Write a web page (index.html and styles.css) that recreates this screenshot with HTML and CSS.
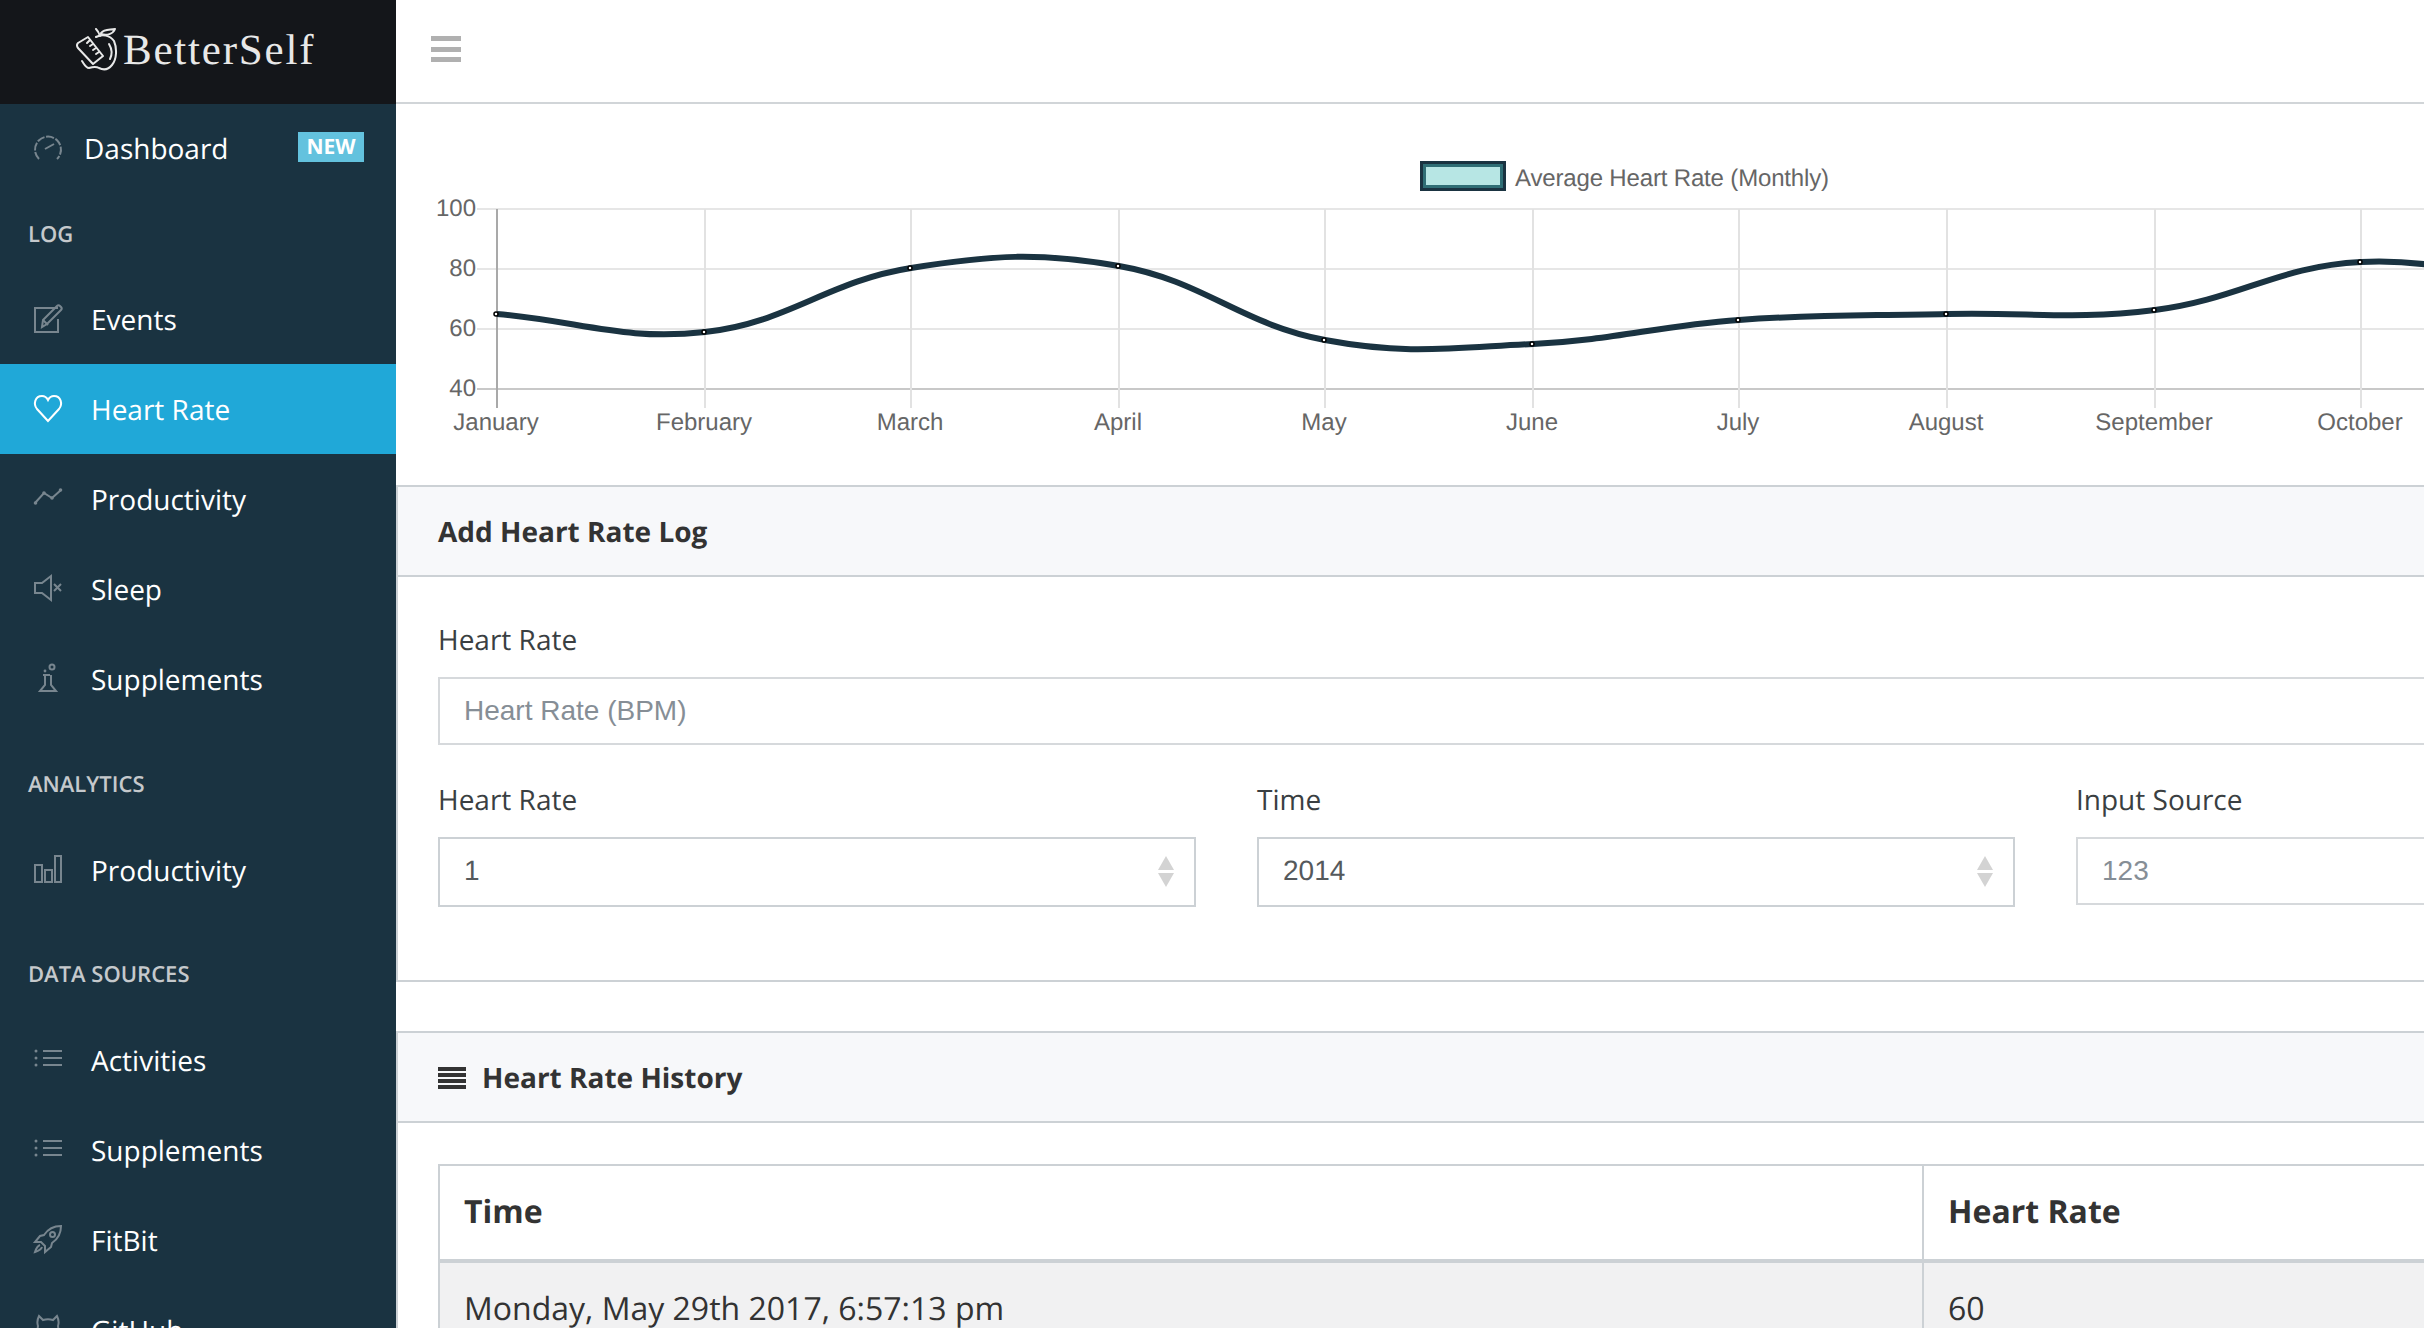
FILE: index.html
```html
<!DOCTYPE html>
<html lang="en">
<head>
<meta charset="utf-8">
<title>BetterSelf - Heart Rate</title>
<link rel="stylesheet" href="styles.css">
</head>
<body>
<div class="app">
  <aside class="sidebar">
    <div class="brand">
      <svg class="brand-logo" viewBox="0 0 42 44" fill="none" stroke="#e8e8e8" stroke-width="2" stroke-linecap="round" stroke-linejoin="round">
        <path d="M20 9C26 6 34 7 38 13C41 20 41 31 36 37C32 42 27 42 23 40C20 38 16 39 13 40C10 40 8 36 6 33"/>
        <path d="M2 15L12 9L27 28L17 36L2 20Q0 17 2 15Z"/>
        <path d="M14 12L11 15M17 16L14 18M20 20L17 22M23 24L20 26"/>
        <path d="M24 8C23 5 22 3 20 1M25 5C28 1 33 2 39 1C37 6 31 8 25 6"/>
        <path d="M33 16C36 21 36 27 34 31"/>
      </svg>
      <span class="brand-name">BetterSelf</span>
    </div>
    <nav class="nav">
      <a class="nav-item nav-item-top">
        <svg class="icon" viewBox="0 0 28 28"><path d="M5 25A13 13 0 1 1 23 25" stroke-dasharray="8 1.6"/><path d="M11 15L20 10"/></svg>
        <span class="nav-label-top">Dashboard</span>
        <span class="badge">NEW</span>
      </a>
      <div class="nav-title">Log</div>
      <a class="nav-item">
        <svg class="icon" viewBox="0 0 28 28"><path d="M24 4H1V28H24V15"/><path d="M8 23L9 16L23 2C24 1 25 1 26 2L27 3C28 4 28 5 27 6L13 20Z"/><path d="M9 16L14 21"/></svg>
        <span>Events</span>
      </a>
      <a class="nav-item active">
        <svg class="icon" viewBox="0 0 28 28"><path d="M14 27L3 15C-1 10 1 2 8 2C11 2 13 4 14 6C15 4 17 2 20 2C27 2 29 10 25 15Z"/></svg>
        <span>Heart Rate</span>
      </a>
      <a class="nav-item">
        <svg class="icon" viewBox="0 0 28 28"><path d="M1 19L10 9L18 14L27 6"/><circle class="dot" cx="1.500" cy="19" r="1.800"/><circle class="dot" cx="10" cy="9" r="1.800"/><circle class="dot" cx="18" cy="14" r="1.800"/><circle class="dot" cx="26.500" cy="6" r="1.800"/></svg>
        <span>Productivity</span>
      </a>
      <a class="nav-item">
        <svg class="icon" viewBox="0 0 28 28"><path d="M17 2V26L8 19H1V9H8Z"/><path d="M20 10L27 17M27 10L20 17"/></svg>
        <span>Sleep</span>
      </a>
      <a class="nav-item">
        <svg class="icon" viewBox="0 0 28 28"><circle cx="18" cy="3" r="2.500"/><circle class="dot" cx="11" cy="7" r="1.400"/><path d="M9 11H16M11 11V21L6 27H22L17 21V11"/></svg>
        <span>Supplements</span>
      </a>
      <div class="nav-title nav-title-gap">Analytics</div>
      <a class="nav-item">
        <svg class="icon" viewBox="0 0 28 28"><rect x="1" y="10" width="7" height="17"/><rect x="11" y="15" width="7" height="12"/><rect x="21" y="1" width="6" height="26"/></svg>
        <span>Productivity</span>
      </a>
      <div class="nav-title nav-title-gap nav-title-tight">Data Sources</div>
      <a class="nav-item">
        <svg class="icon" viewBox="0 0 28 28"><path d="M9 6H28M9 13H28M9 20H28"/><circle class="dot" cx="2" cy="6" r="1.500"/><circle class="dot" cx="2" cy="13" r="1.500"/><circle class="dot" cx="2" cy="20" r="1.500"/></svg>
        <span>Activities</span>
      </a>
      <a class="nav-item">
        <svg class="icon" viewBox="0 0 28 28"><path d="M9 6H28M9 13H28M9 20H28"/><circle class="dot" cx="2" cy="6" r="1.500"/><circle class="dot" cx="2" cy="13" r="1.500"/><circle class="dot" cx="2" cy="20" r="1.500"/></svg>
        <span>Supplements</span>
      </a>
      <a class="nav-item">
        <svg class="icon" viewBox="0 0 28 28"><path d="M27 1C20 1 14 4 10 10L6 11L1 17L7 17L11 21L11 27L17 22L18 18C24 14 27 8 27 1Z"/><circle cx="18.500" cy="9.500" r="2.500"/><path d="M6 20C3 21 2 24 1 27C4 26 7 25 8 22"/></svg>
        <span>FitBit</span>
      </a>
      <a class="nav-item">
        <svg class="icon" viewBox="0 0 28 28"><path d="M5 1L9 5C12 4 16 4 19 5L23 1C25 5 25 8 24 11C25 16 23 21 17 22V27H11V22C5 21 3 16 4 11C3 8 3 5 5 1Z"/></svg>
        <span>GitHub</span>
      </a>
    </nav>
  </aside>
  <main class="main">
    <header class="topbar">
      <svg class="hamburger" viewBox="0 0 30 26"><path d="M0 2.500H30M0 13.500H30M0 23.500H30"/></svg>
    </header>
    <section class="chart-area">
      <svg class="chart" viewBox="396 104 2028 381" width="2028" height="381">
        <rect class="legend-outer" x="1420" y="161" width="86" height="30"/>
        <rect class="legend-mid" x="1423" y="164" width="80" height="24"/>
        <rect class="legend-fill" x="1426" y="167" width="74" height="18"/>
        <text class="legend-text" x="1515" y="186">Average Heart Rate (Monthly)</text>

        <path class="grid" d="M477 209H2424M477 269H2424M477 329H2424"/>
        <path class="grid-axis" d="M477 389H2424"/>
        <path class="grid-v" d="M705 209V408M911 209V408M1119 209V408M1325 209V408M1533 209V408M1739 209V408M1947 209V408M2155 209V408M2361 209V408"/>
        <path class="grid-first" d="M497 209V408"/>

        <text class="tick tick-y" x="476" y="216">100</text>
        <text class="tick tick-y" x="476" y="276">80</text>
        <text class="tick tick-y" x="476" y="336">60</text>
        <text class="tick tick-y" x="476" y="396">40</text>

        <text class="tick tick-x" x="496" y="430">January</text>
        <text class="tick tick-x" x="704" y="430">February</text>
        <text class="tick tick-x" x="910" y="430">March</text>
        <text class="tick tick-x" x="1118" y="430">April</text>
        <text class="tick tick-x" x="1324" y="430">May</text>
        <text class="tick tick-x" x="1532" y="430">June</text>
        <text class="tick tick-x" x="1738" y="430">July</text>
        <text class="tick tick-x" x="1946" y="430">August</text>
        <text class="tick tick-x" x="2154" y="430">September</text>
        <text class="tick tick-x" x="2360" y="430">October</text>

        <path class="line" d="M497 314C580 321.200 623.500 341.100 705 332C789 322.700 826.700 281.400 911 268C992.300 255 1038.300 252 1119 266C1203.900 280.800 1240.100 324 1325 340C1405.700 355.200 1450.200 348 1533 344C1615.800 340 1656.200 326 1739 320C1821.800 314 1863.800 316 1947 314C2030.200 312 2073 320.300 2155 310C2238.600 299.500 2278 266 2361 262C2444 258 2500 282 2569 290"/>
        <g class="points">
          <circle cx="496" cy="314" r="2"/><circle cx="704" cy="332" r="2"/><circle cx="910" cy="268" r="2"/><circle cx="1118" cy="266" r="2"/><circle cx="1324" cy="340" r="2"/><circle cx="1532" cy="344" r="2"/><circle cx="1738" cy="320" r="2"/><circle cx="1946" cy="314" r="2"/><circle cx="2154" cy="310" r="2"/><circle cx="2360" cy="262" r="2"/>
        </g>
      </svg>
    </section>
    <section class="card card-form">
      <div class="card-header"><strong>Add Heart Rate Log</strong></div>
      <form class="card-body form-body">
        <div class="field field-wide">
          <label class="label" for="bpm">Heart Rate</label>
          <input class="input" id="bpm" type="text" placeholder="Heart Rate (BPM)">
        </div>
        <div class="form-row">
          <div class="field">
            <div class="label">Heart Rate</div>
            <div class="select"><span>1</span><svg class="arrows" viewBox="0 0 16 31"><path d="M8 0L16 14H0Z"/><path d="M0 17H16L8 31Z"/></svg></div>
          </div>
          <div class="field">
            <div class="label">Time</div>
            <div class="select"><span>2014</span><svg class="arrows" viewBox="0 0 16 31"><path d="M8 0L16 14H0Z"/><path d="M0 17H16L8 31Z"/></svg></div>
          </div>
          <div class="field">
            <label class="label" for="src">Input Source</label>
            <input class="input" id="src" type="text" placeholder="123">
          </div>
        </div>
      </form>
    </section>
    <section class="card card-history">
      <div class="card-header">
        <svg class="justify" viewBox="0 0 28 22"><path d="M0 0H28V4H0ZM0 6H28V10H0ZM0 12H28V16H0ZM0 18H28V22H0Z"/></svg>
        <strong>Heart Rate History</strong>
      </div>
      <div class="card-body table-body">
        <table class="table">
          <thead><tr><th class="col-time">Time</th><th>Heart Rate</th></tr></thead>
          <tbody><tr><td>Monday, May 29th 2017, 6:57:13 pm</td><td>60</td></tr></tbody>
        </table>
      </div>
    </section>
  </main>
</div>
</body>
</html>
```
FILE: styles.css
```css
* { box-sizing: border-box; }
html, body { margin: 0; padding: 0; height: 100%; overflow: hidden; background: #fff; }
body { font-family: "Open Sans", sans-serif; font-size: 28px; color: #263238; text-rendering: geometricPrecision; }
.app { display: flex; width: 2424px; height: 1328px; overflow: hidden; }

/* Sidebar */
.sidebar { flex: 0 0 396px; background: #1a3341; color: #fff; height: 1328px; overflow: hidden; }
.brand { height: 104px; background: #14161a; display: flex; align-items: center; padding-left: 76px; gap: 5px; }
.brand-logo { width: 42px; height: 44px; flex: none; margin-top: -4px; }
.brand-name { font-family: "Liberation Serif", serif; font-size: 43px; letter-spacing: 1.800px; color: #e8e8e8; line-height: 1; padding-bottom: 3px; }
.nav { display: flex; flex-direction: column; }
.nav-item { display: flex; align-items: center; height: 90px; flex: none; padding-left: 34px; gap: 29px; color: #fff; line-height: 42px; }
.nav-item span { margin-top: 2px; }
.nav-item-top { gap: 22px; padding-right: 32px; }
.nav-item span.nav-label-top { flex: 1; margin-top: 0; }
.nav-item.active { background: #20a8d8; }
.icon { width: 28px; height: 28px; flex: none; margin-top: -2px; fill: none; stroke: #78868f; stroke-width: 2; overflow: visible; }
.icon .dot { fill: #78868f; stroke: none; }
.active .icon { stroke: #fff; }
.nav-item span.badge { position: relative; top: -2px; margin-top: 0; width: 66px; height: 30px; background: #63c2de; color: #fff; font-size: 21px; font-weight: 700; line-height: 30px; text-align: center; }
.nav-title { height: 80px; flex: none; padding-left: 28px; line-height: 80px; font-size: 22px; font-weight: 600; color: #c5c9cc; text-transform: uppercase; }
.nav-title-gap { height: 101px; padding-top: 21px; line-height: 78px; }
.nav-title-tight { height: 100px; padding-top: 20px; }

/* Main */
.main { flex: 0 0 2499px; min-width: 0; }
.topbar { height: 104px; border-bottom: 2px solid #d1d5d8; display: flex; align-items: center; padding: 0 0 4px 35px; }
.hamburger { width: 30px; height: 26px; fill: none; stroke: #b0b0b0; stroke-width: 5; }
.chart-area { height: 381px; }
.chart { display: block; font-family: "Liberation Sans", sans-serif; }
.legend-outer { fill: #1a3341; }
.legend-mid { fill: #2f6e75; }
.legend-fill { fill: #b7e6e4; }
.legend-text { font-size: 24px; fill: #666; letter-spacing: -0.160px; }
.tick { font-size: 24px; fill: #666; }
.tick-y { text-anchor: end; }
.tick-x { text-anchor: middle; }
.grid { stroke: #e6e6e6; stroke-width: 2; fill: none; }
.grid-axis { stroke: #c8c8c8; stroke-width: 2; fill: none; }
.grid-v { stroke: #e2e2e2; stroke-width: 2; fill: none; }
.grid-first { stroke: #a9a9a9; stroke-width: 2; fill: none; }
.line { fill: none; stroke: #1a3341; stroke-width: 6; }
.points circle { fill: #fff; stroke: #000; stroke-width: 1.5; }

/* Cards */
.card { width: 2499px; border: 2px solid #ccd1d5; border-width: 0 2px 2px; background: #fff; }
.card-header { height: 92px; background: #f7f8fa; border-top: 2px solid #ccd1d5; border-bottom: 2px solid #ccd1d5; display: flex; align-items: center; padding: 1px 0 0 40px; color: #333; gap: 16px; }
.card-header strong { font-weight: 700; }
.card-body { padding: 42px 40px 71px; }
.form-body { height: 403px; }
.field-wide { margin-bottom: 34px; }
.label { display: block; height: 42px; line-height: 42px; margin-bottom: 16px; color: #3a3f42; }
.input { display: block; width: 100%; height: 68px; border: 2px solid #d6d9dc; padding: 0 24px; font: 28px "Liberation Sans", sans-serif; color: #55595c; background: #fff; border-radius: 0; outline: none; }
.input::placeholder { color: #868e96; opacity: 1; }
.form-row { display: grid; grid-template-columns: 758px 758px 758px; column-gap: 61px; }
.select { display: flex; align-items: center; justify-content: space-between; height: 70px; border: 2px solid #ccd1d5; padding: 0 20px 2px 24px; font: 28px "Liberation Sans", sans-serif; color: #55595c; }
.arrows { width: 16px; height: 31px; fill: #d3d3d3; }
.card-history { margin-top: 49px; border-bottom: 0; }
.justify { width: 28px; height: 22px; fill: #333; flex: none; }
.table-body { padding: 41px 40px 0; }
.table { width: 2419px; border-collapse: collapse; table-layout: fixed; font-size: 32px; color: #333; }
.table th, .table td { text-align: left; padding: 0 24px 2px; border: 2px solid #ccd1d5; }
.table th { height: 96px; border-bottom-width: 4px; font-weight: 700; }
.col-time { width: 1484px; }
.table td { height: 96px; background: #f1f1f2; }
```
